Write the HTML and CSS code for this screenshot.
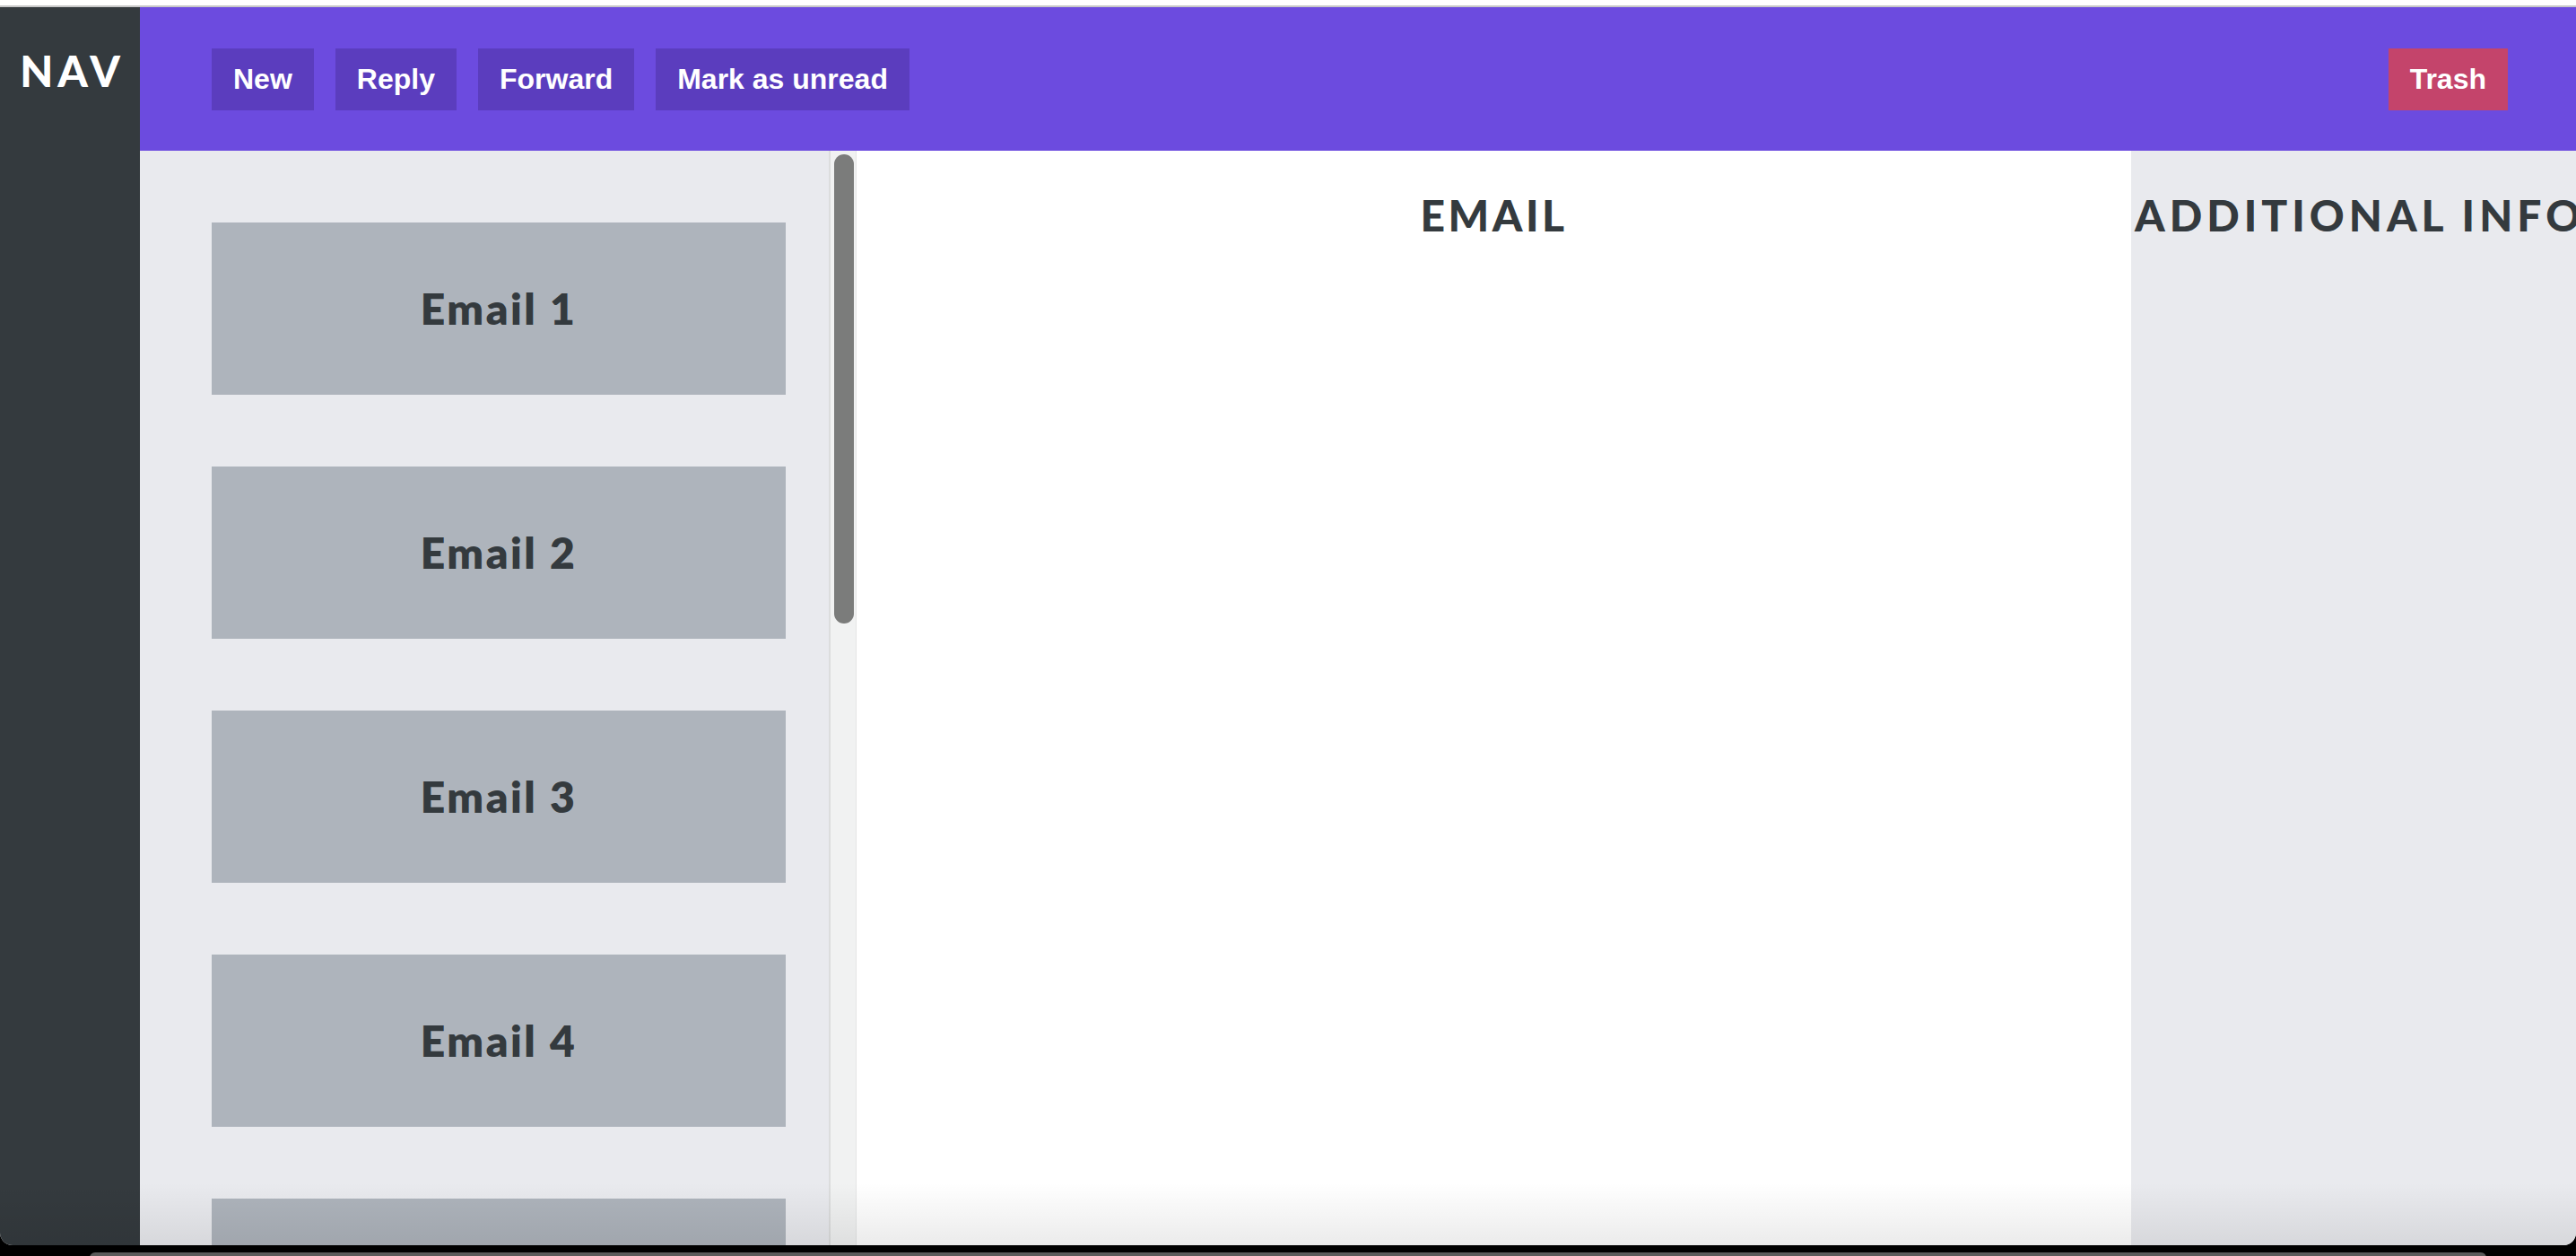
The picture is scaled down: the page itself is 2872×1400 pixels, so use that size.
FILE: index.html
```html
<!DOCTYPE html>
<html lang="en">
<head>
<meta charset="utf-8">
<title>Mail</title>
<link rel="stylesheet" href="styles.css">
</head>
<body>
<div class="top-strip"></div>
<div class="app">
  <aside class="nav">
    <h2 class="heading">NAV</h2>
  </aside>
  <div class="workspace">
    <header class="toolbar">
      <div class="actions">
        <button class="btn">New</button>
        <button class="btn">Reply</button>
        <button class="btn">Forward</button>
        <button class="btn">Mark as unread</button>
      </div>
      <button class="btn btn-danger">Trash</button>
    </header>
    <main class="panes">
      <section class="list">
        <div class="card"><h2 class="heading">Email 1</h2></div>
        <div class="card"><h2 class="heading">Email 2</h2></div>
        <div class="card"><h2 class="heading">Email 3</h2></div>
        <div class="card"><h2 class="heading">Email 4</h2></div>
        <div class="card"><h2 class="heading">Email 5</h2></div>
      </section>
      <div class="scroll-track"><div class="scroll-thumb"></div></div>
      <section class="reader">
        <h2 class="heading">EMAIL</h2>
      </section>
      <section class="info">
        <h2 class="heading info-heading">ADDITIONAL INFO</h2>
      </section>
    </main>
  </div>
  <div class="bottom-shade"></div>
</div>
<div class="desk"><div class="desk-bar"></div></div>
</body>
</html>
```

FILE: styles.css
```css
* { box-sizing: border-box; }

html, body {
  margin: 0;
  padding: 0;
}

body {
  background: #000;
  width: 2872px;
  height: 1400px;
  overflow: hidden;
  font-family: "Liberation Sans", Arial, sans-serif;
}

.top-strip {
  height: 6px;
  background: #fff;
}

.app {
  position: relative;
  display: flex;
  height: 1382px;
  border-top: 2px solid #c8c8c8;
  border-radius: 0 0 14px 14px;
  overflow: hidden;
  background: #fff;
}

.heading {
  margin: 0;
  font-family: Lato, "Open Sans", sans-serif;
  font-weight: 900;
  font-size: 48px;
  line-height: 58px;
  color: #343a3e;
  letter-spacing: 3.5px;
}

.nav {
  width: 156px;
  flex: none;
  background: #343a3e;
  padding-top: 42px;
  text-align: center;
}

.nav .heading {
  color: #fff;
  letter-spacing: 5px;
  text-indent: 5px;
}

.workspace {
  flex: 1;
  display: flex;
  flex-direction: column;
  min-width: 0;
}

.toolbar {
  height: 160px;
  flex: none;
  background: #6c4bdf;
  display: flex;
  align-items: center;
  justify-content: space-between;
  padding: 0 76px 0 80px;
}

.actions {
  display: flex;
  gap: 24px;
}

.btn {
  border: none;
  margin: 0;
  background: #5b3dbe;
  color: #fff;
  font-family: "Liberation Sans", Arial, sans-serif;
  font-weight: 700;
  font-size: 32px;
  line-height: 37px;
  padding: 16px 24px;
  border-radius: 0;
}

.btn-danger {
  background: #c4446b;
}

.panes {
  flex: 1;
  display: flex;
  min-height: 0;
}

.list {
  width: 768px;
  flex: none;
  background: #e9eaee;
  padding: 80px 48px 0 80px;
  display: flex;
  flex-direction: column;
  gap: 80px;
  overflow: hidden;
}

.card {
  flex: none;
  width: 640px;
  height: 192px;
  background: #aeb4bc;
  display: flex;
  align-items: center;
  justify-content: center;
}

.card .heading {
  font-weight: 800;
  letter-spacing: 2.5px;
}

.scroll-track {
  width: 31px;
  flex: none;
  background: #f1f2f2;
  border-left: 2px solid #dcdddd;
  border-right: 1px solid #e5e6e6;
  padding: 4px 0 0 4px;
}

.scroll-thumb {
  width: 22px;
  height: 523px;
  border-radius: 11px;
  background: #7b7c7b;
}

.reader {
  width: 1421px;
  flex: none;
  background: #fff;
  padding-top: 43px;
  text-align: center;
}

.info {
  flex: 1;
  min-width: 0;
  background: #e9eaee;
  padding-top: 43px;
  text-align: center;
}

.info-heading {
  white-space: nowrap;
  text-align: left;
  padding-left: 4px;
  letter-spacing: 5px;
}

.bottom-shade {
  position: absolute;
  left: 0;
  right: 0;
  bottom: 0;
  height: 70px;
  pointer-events: none;
  background: linear-gradient(to bottom, rgba(0,0,0,0), rgba(0,0,0,0.08));
}

.desk {
  height: 10px;
  position: relative;
}

.desk-bar {
  position: absolute;
  left: 100px;
  right: 100px;
  top: 8px;
  height: 6px;
  background: #5a5a5a;
  border-radius: 6px 6px 0 0;
}
```
